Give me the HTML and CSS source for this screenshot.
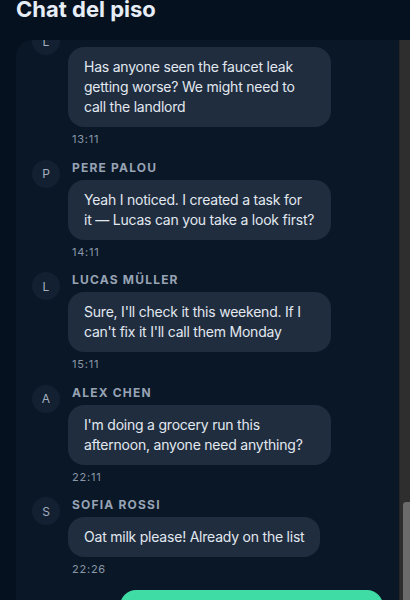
FILE: index.html
```html
<!DOCTYPE html>
<html lang="en">
<head>
<meta charset="utf-8">
<title>Chat del piso</title>
<link rel="stylesheet" href="styles.css">
</head>
<body>
<header class="top">
  <h1 class="title">Chat del piso</h1>
</header>
<main class="chat">
  <div class="viewport">
    <div class="thread">
      <article class="msg">
        <div class="avatar">L</div>
        <div class="body">
          <div class="name">Lucas Müller</div>
          <p class="bubble">Has anyone seen the faucet leak getting worse? We might need to call the landlord</p>
          <time class="time">13:11</time>
        </div>
      </article>
      <article class="msg">
        <div class="avatar">P</div>
        <div class="body">
          <div class="name">Pere Palou</div>
          <p class="bubble">Yeah I noticed. I created a task for it&nbsp;— Lucas can you take a look first?</p>
          <time class="time">14:11</time>
        </div>
      </article>
      <article class="msg">
        <div class="avatar">L</div>
        <div class="body">
          <div class="name">Lucas Müller</div>
          <p class="bubble">Sure, I'll check it this weekend. If I can't fix it I'll call them Monday</p>
          <time class="time">15:11</time>
        </div>
      </article>
      <article class="msg">
        <div class="avatar">A</div>
        <div class="body">
          <div class="name">Alex Chen</div>
          <p class="bubble">I'm doing a grocery run this afternoon, anyone need anything?</p>
          <time class="time">22:11</time>
        </div>
      </article>
      <article class="msg">
        <div class="avatar">S</div>
        <div class="body">
          <div class="name">Sofia Rossi</div>
          <p class="bubble">Oat milk please! Already on the list</p>
          <time class="time">22:26</time>
        </div>
      </article>
      <article class="msg mine">
        <div class="body">
          <p class="bubble">Perfect, and some coffee too if you can. I'll pay you back tonight</p>
          <time class="time">22:31</time>
        </div>
      </article>
    </div>
  </div>
  <div class="rail" aria-hidden="true">
    <div class="thumb"></div>
  </div>
</main>
</body>
</html>
```

FILE: styles.css
```css
html, body {
  margin: 0;
  height: 100%;
  overflow: hidden;
  background: #06111f;
  font-family: Inter, "Noto Sans", sans-serif;
}

.top {
  height: 40px;
  overflow: hidden;
  padding: 0 16px;
}

.title {
  margin: -5px 0 0;
  font-size: 22px;
  line-height: 28px;
  font-weight: 700;
  color: #e6edf6;
}

.chat {
  display: flex;
  margin-left: 16px;
  height: calc(100vh - 40px);
  overflow: hidden;
  background: #0a1727;
  border-top-left-radius: 16px;
}

.viewport {
  flex: 1;
  min-width: 0;
  overflow: hidden;
}

.rail {
  flex: none;
  width: 11px;
  box-sizing: border-box;
  padding-top: 462px;
  display: flex;
  flex-direction: column;
  background: #2e2e2e;
  border-left: 1px solid #262626;
}

.thumb {
  flex: 1;
  margin-left: 3px;
  background: #6b6b6b;
  border-top-left-radius: 3px;
}

.thread {
  display: flex;
  flex-direction: column;
  gap: 12px;
  margin-top: -13px;
  padding: 0 16px 16px;
}

.msg {
  display: flex;
  gap: 8px;
  align-items: flex-start;
}

.avatar {
  flex: none;
  width: 28px;
  height: 28px;
  border-radius: 50%;
  background: #122031;
  color: #a3afbf;
  font-size: 12px;
  display: grid;
  place-items: center;
}

.body {
  max-width: 75%;
  display: flex;
  flex-direction: column;
  align-items: flex-start;
}

.name {
  margin: 0 0 4px 4px;
  font-size: 12px;
  line-height: 16px;
  font-weight: 700;
  letter-spacing: 0.1em;
  text-transform: uppercase;
  color: #97a3b4;
}

.bubble {
  margin: 0;
  padding: 10px 16px;
  background: #1f2d3e;
  color: #e2e8f0;
  font-size: 14px;
  line-height: 20px;
  letter-spacing: -0.22px;
  border-radius: 16px;
}

.time {
  margin: 4px 0 0 4px;
  font-size: 11px;
  line-height: 16.5px;
  letter-spacing: 0.07em;
  color: #8a97a8;
}

.msg.mine {
  justify-content: flex-end;
}

.mine .body {
  align-items: flex-end;
}

.mine .bubble {
  background: #40dca5;
  color: #052018;
}

.mine .time {
  margin: 4px 4px 0 0;
}
```
